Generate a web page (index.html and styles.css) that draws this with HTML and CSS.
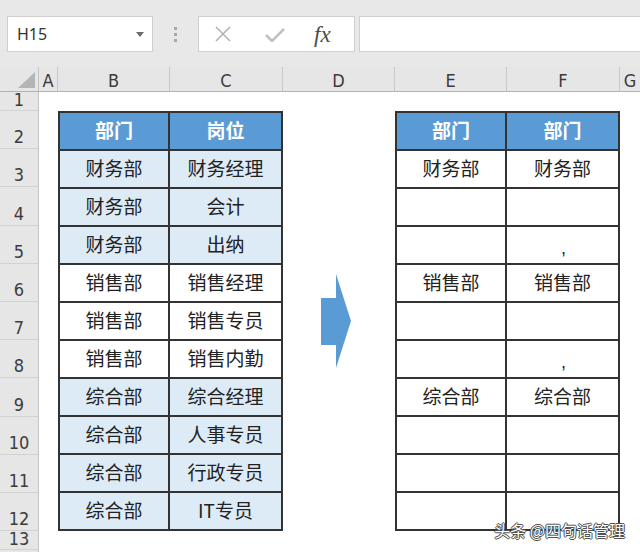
FILE: index.html
```html
<!DOCTYPE html>
<html lang="zh-CN">
<head>
<meta charset="utf-8">
<title>Excel</title>
<link rel="stylesheet" href="styles.css">
</head>
<body>
<div class="app">
  <div class="toolbar">
    <div class="namebox"><span class="ref">H15</span><span class="caret"></span></div>
    <div class="grip"><i></i><i></i><i></i></div>
    <div class="fxbox">
      <svg class="ico-x" width="16" height="16" viewBox="0 0 16 16"><path d="M1 1 L15 15 M15 1 L1 15" stroke="#b3b3b3" stroke-width="1.6" fill="none"/></svg>
      <svg class="ico-ok" width="20" height="14" viewBox="0 0 20 14"><path d="M1 7 L7 13 L19 1" stroke="#c2c2c2" stroke-width="2.6" fill="none"/></svg>
      <span class="fx">fx</span>
    </div>
    <div class="formula"></div>
  </div>

  <div class="colheads">
    <div class="corner"><svg width="17" height="16" viewBox="0 0 17 16"><polygon points="17,0 17,16 0,16" fill="#b5b5b5"/></svg></div>
    <div class="ch">A</div>
    <div class="ch">B</div>
    <div class="ch">C</div>
    <div class="ch">D</div>
    <div class="ch">E</div>
    <div class="ch">F</div>
    <div class="ch last">G</div>
  </div>

  <div class="sheet">
    <div class="rowheads">
      <div class="rh short">1</div>
      <div class="rh">2</div>
      <div class="rh">3</div>
      <div class="rh">4</div>
      <div class="rh">5</div>
      <div class="rh">6</div>
      <div class="rh">7</div>
      <div class="rh">8</div>
      <div class="rh">9</div>
      <div class="rh">10</div>
      <div class="rh">11</div>
      <div class="rh">12</div>
      <div class="rh short">13</div>
      <div class="rh rest"></div>
    </div>
    <div class="cells">
      <div class="tbl tbl-left">
        <div class="c head">部门</div><div class="c head">岗位</div>
        <div class="c fill">财务部</div><div class="c fill">财务经理</div>
        <div class="c fill">财务部</div><div class="c fill">会计</div>
        <div class="c fill">财务部</div><div class="c fill">出纳</div>
        <div class="c">销售部</div><div class="c">销售经理</div>
        <div class="c">销售部</div><div class="c">销售专员</div>
        <div class="c">销售部</div><div class="c">销售内勤</div>
        <div class="c fill">综合部</div><div class="c fill">综合经理</div>
        <div class="c fill">综合部</div><div class="c fill">人事专员</div>
        <div class="c fill">综合部</div><div class="c fill">行政专员</div>
        <div class="c fill">综合部</div><div class="c fill">IT专员</div>
      </div>
      <div class="arrow">
        <svg width="30" height="94" viewBox="0 0 30 94"><path d="M0 24 H15 V0 L30 47 L15 94 V71 H0 Z" fill="#5b9bd5"/></svg>
      </div>
      <div class="tbl tbl-right">
        <div class="c head">部门</div><div class="c head">部门</div>
        <div class="c">财务部</div><div class="c">财务部</div>
        <div class="c"></div><div class="c"></div>
        <div class="c"></div><div class="c comma">,</div>
        <div class="c">销售部</div><div class="c">销售部</div>
        <div class="c"></div><div class="c"></div>
        <div class="c"></div><div class="c comma">,</div>
        <div class="c">综合部</div><div class="c">综合部</div>
        <div class="c"></div><div class="c"></div>
        <div class="c"></div><div class="c"></div>
        <div class="c"></div><div class="c"></div>
      </div>
    </div>
  </div>

  <div class="watermark">头条 @四句话管理</div>
</div>
</body>
</html>
```

FILE: styles.css
```css
* { box-sizing: border-box; }
html, body { margin: 0; padding: 0; }
body {
  width: 640px;
  height: 552px;
  overflow: hidden;
  background: #ffffff;
  font-family: "Noto Sans CJK SC", "Noto Sans", sans-serif;
}
.app {
  position: relative;
  width: 640px;
  height: 552px;
  overflow: hidden;
}

/* toolbar */
.toolbar {
  height: 67px;
  background: #e8e8e8;
  display: flex;
  align-items: flex-start;
  padding-top: 16px;
}
.namebox {
  margin-left: 7px;
  width: 146px;
  height: 36px;
  background: #ffffff;
  border: 1px solid #cfcfcf;
  display: flex;
  align-items: center;
  justify-content: space-between;
  padding: 0 8px 0 9px;
}
.ref {
  font-family: "Noto Sans", sans-serif;
  font-size: 16px;
  color: #333333;
}
.caret {
  width: 0;
  height: 0;
  border-left: 4px solid transparent;
  border-right: 4px solid transparent;
  border-top: 5px solid #6b6b6b;
}
.grip {
  width: 45px;
  height: 36px;
  display: flex;
  flex-direction: column;
  align-items: center;
  justify-content: center;
  gap: 3px;
}
.grip i {
  display: block;
  width: 3px;
  height: 3px;
  background: #a8a8a8;
}
.fxbox {
  width: 157px;
  height: 36px;
  background: #ffffff;
  border: 1px solid #cfcfcf;
  display: flex;
  align-items: center;
}
.ico-x { margin-left: 16px; }
.ico-ok { margin-left: 34px; margin-top: 2px; }
.fx {
  margin-left: 29px;
  font-family: "Liberation Serif", serif;
  font-style: italic;
  font-size: 23px;
  color: #4a4a4a;
  line-height: 1;
}
.formula {
  flex: 1;
  margin-left: 4px;
  height: 36px;
  background: #ffffff;
  border: 1px solid #cfcfcf;
  border-right: none;
}

/* column headers */
.colheads {
  display: grid;
  grid-template-columns: 39px 19px 112px 113px 112px 112px 113px 1fr;
  height: 25px;
  background: #e6e6e6;
  border-bottom: 1px solid #b3b3b3;
}
.corner {
  border-right: 1px solid #c4c4c4;
  display: flex;
  align-items: flex-end;
  justify-content: flex-end;
  padding: 0 3px 3px 0;
}
.ch {
  border-right: 1px solid #c9c9c9;
  display: flex;
  align-items: center;
  justify-content: center;
  font-family: "DejaVu Sans", sans-serif;
  font-stretch: condensed;
  font-size: 18px;
  color: #3c3c3c;
  padding-top: 2px;
}
.ch.last { border-right: none; }

/* sheet */
.sheet {
  display: flex;
  height: 460px;
}
.rowheads {
  width: 39px;
  display: flex;
  flex-direction: column;
  background: #e6e6e6;
  border-right: 1px solid #c4c4c4;
}
.rh {
  height: 38.2px;
  flex: none;
  border-bottom: 1px solid #d2d2d2;
  display: flex;
  align-items: flex-end;
  justify-content: center;
  font-family: "DejaVu Sans", sans-serif;
  font-stretch: condensed;
  font-size: 18px;
  line-height: 20px;
  color: #3c3c3c;
  padding-bottom: 1px;
}
.rh.short { height: 19px; padding-bottom: 0; }
.rh.rest { flex: 1; border-bottom: none; }

.cells {
  flex: 1;
  display: grid;
  grid-template-columns: 19px 112px 113px 112px 112px 113px 1fr;
  grid-template-rows: 19px repeat(11, 38.2px) 1fr;
  background: #ffffff;
}

.tbl {
  grid-row: 2 / 13;
  display: grid;
  grid-template-columns: 110px 1fr;
  grid-template-rows: repeat(11, 1fr);
  border-top: 2px solid #333333;
  border-left: 2px solid #333333;
}
.tbl-left { grid-column: 2 / 4; }
.tbl-right { grid-column: 5 / 7; }

.c {
  border-right: 2px solid #333333;
  border-bottom: 2px solid #333333;
  display: flex;
  align-items: center;
  justify-content: center;
  font-size: 19px;
  color: #222222;
  background: #ffffff;
  line-height: 1;
  padding-bottom: 4px;
}
.c.head {
  background: #5b9bd5;
  color: #ffffff;
  font-weight: 700;
}
.c.fill { background: #ddebf7; }
.c.comma {
  align-items: flex-end;
  padding-bottom: 6px;
  font-family: "Liberation Sans", sans-serif;
  font-size: 18px;
  padding-left: 2px;
}

.arrow {
  grid-column: 4;
  grid-row: 2 / 13;
  align-self: center;
  justify-self: start;
  margin-left: 38px;
  display: flex;
}

.watermark {
  position: absolute;
  right: 15px;
  bottom: 13px;
  font-size: 16px;
  line-height: 18px;
  color: #ffffff;
  text-shadow: 0 0 1px #333, 1px 0 0 #555, -1px 0 0 #555, 0 1px 0 #555, 0 -1px 0 #555;
}
```
